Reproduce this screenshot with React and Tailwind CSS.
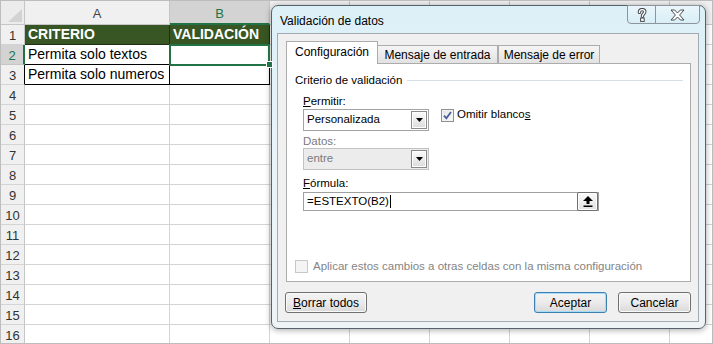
import React from 'react';

const cols = [
  { key: 'A', w: 'w-[145px]', label: 'A' },
  { key: 'B', w: 'w-[100px]', label: 'B' },
  { key: 'C', w: 'w-[80px]', label: '' },
  { key: 'D', w: 'w-[80px]', label: '' },
  { key: 'E', w: 'w-[80px]', label: '' },
  { key: 'F', w: 'w-[80px]', label: '' },
  { key: 'G', w: 'w-[80px]', label: '' },
  { key: 'H', w: 'w-[80px]', label: '' },
];

const data = {
  1: { A: 'CRITERIO', B: 'VALIDACIÓN' },
  2: { A: 'Permita solo textos', B: '' },
  3: { A: 'Permita solo numeros', B: '' },
};

const rows = Array.from({ length: 16 }, (_, i) => i + 1);

function cellClass(r, c) {
  const inTable = r <= 3 && (c === 'A' || c === 'B');
  if (r === 1 && inTable) return 'bg-[#375623] text-white font-bold border-r border-b border-[#1d2e12]';
  if (inTable) return 'bg-white text-black border-r border-b border-black';
  return 'bg-white border-r border-b border-[#d4d4d4]';
}

function rowHeadClass(r) {
  if (r === 2) return 'bg-[#d3d3d3] text-[#217346] border-r-2 border-r-[#217346] border-b border-b-[#c6c6c6]';
  if (r === 3) return 'bg-[#f0f0f0] text-[#333] border-r border-r-black border-b border-b-[#d4d4d4]';
  return 'bg-[#f0f0f0] text-[#333] border-r border-r-[#c6c6c6] border-b border-b-[#d4d4d4]';
}

function Sheet() {
  return (
    <div className="flex flex-col">
      {/* Column headers */}
      <div className="flex h-[24px] shrink-0">
        <div className="w-[24px] shrink-0 bg-[#ececec] border-r border-b border-[#c6c6c6] flex items-end justify-end p-[2px]">
          <svg width="14" height="13" viewBox="0 0 14 13">
            <polygon points="14,0 14,13 0,13" fill="#d3d3d3" />
          </svg>
        </div>
        {cols.map((c) =>
          c.key === 'B' ? (
            <div key={c.key} className={`${c.w} shrink-0 bg-[#d3d3d3] text-[#217346] border-r border-[#c6c6c6] border-b-2 border-b-[#217346] flex items-center justify-center pt-[3px] text-[13px]`}>
              {c.label}
            </div>
          ) : (
            <div key={c.key} className={`${c.w} shrink-0 bg-[#f0f0f0] text-[#444] border-r border-b border-[#c6c6c6] flex items-center justify-center pt-[3px] text-[13px]`}>
              {c.label}
            </div>
          )
        )}
      </div>

      {rows.map((r) => (
        <div key={r} className="flex h-[20px] shrink-0">
          <div className={`w-[24px] shrink-0 flex items-center justify-center pt-[2px] text-[13px] ${rowHeadClass(r)}`}>
            {r}
          </div>
          {cols.map((c) => (
            <div key={c.key} className={`${c.w} shrink-0 relative flex items-center pl-[3px] text-[14px] whitespace-nowrap ${cellClass(r, c.key)}`}>
              {data[r]?.[c.key]}
              {r === 2 && c.key === 'B' && (
                <>
                  <div className="absolute -left-[1px] -top-[1px] w-[101px] h-[22px] border-2 border-[#217346] z-10" />
                  <div className="absolute left-[96px] top-[16px] w-[7px] h-[7px] bg-[#217346] border border-white z-10" />
                </>
              )}
            </div>
          ))}
        </div>
      ))}
    </div>
  );
}

function DropBtn() {
  return (
    <div className="w-[16px] h-[18px] border border-[#8a8a8a] bg-gradient-to-b from-[#fbfbfb] to-[#dcdcdc] shadow-[inset_0_0_0_1px_#ffffff] flex items-center justify-center">
      <svg width="7" height="4" viewBox="0 0 7 4">
        <polygon points="0,0 7,0 3.5,4" fill="#000" />
      </svg>
    </div>
  );
}

function Btn({ children, className = '', primary }) {
  return (
    <button
      className={`h-[21px] rounded-[3px] border bg-gradient-to-b from-[#f4f4f4] via-[#ebebeb] to-[#d9d9d9] text-[12px] text-black flex items-center justify-center ${
        primary ? 'border-[#3c7fb1] shadow-[inset_0_0_0_1px_#a6dcf8]' : 'border-[#707070] shadow-[inset_0_0_0_1px_#fafafa]'
      } ${className}`}
    >
      {children}
    </button>
  );
}

function Dialog() {
  return (
    <div className="absolute left-[270px] top-[4px] w-[435px] h-[324px] rounded-[7px] border border-[#55626d] bg-gradient-to-b from-[#dcf0f8] via-[#e9f4f8] to-[#eef3f6] shadow-[0_1px_6px_rgba(0,0,0,0.35)] flex flex-col pl-[5px] pr-[6px] pb-[6px] text-[11.5px] text-black">
      {/* Title bar */}
      <div className="h-[27px] shrink-0 flex justify-between">
        <span className="pl-[3px] pt-[8px] leading-[14px] text-[12px]">Validación de datos</span>
        <div className="flex h-[19px] -mt-[1px] -mr-[1px]">
          <div className="w-[29px] h-full border border-[#8d949b] rounded-bl-[4px] bg-gradient-to-b from-[#eaf6fb] to-[#d8eef6] flex items-center justify-center">
            <svg width="10" height="14" viewBox="0 0 10 14">
              <path d="M2.4 4.4 C2.4 2.4 3.6 1.6 5.2 1.6 C7 1.6 7.8 2.6 7.8 3.8 C7.8 5.6 5.4 5.8 5.4 8.2" fill="none" stroke="#45494d" strokeWidth="3.4" strokeLinecap="round" />
              <path d="M2.4 4.4 C2.4 2.4 3.6 1.6 5.2 1.6 C7 1.6 7.8 2.6 7.8 3.8 C7.8 5.6 5.4 5.8 5.4 8.2" fill="none" stroke="#ffffff" strokeWidth="1.4" strokeLinecap="round" />
              <rect x="3.6" y="10" width="3.6" height="3.4" fill="#ffffff" stroke="#45494d" strokeWidth="1" />
            </svg>
          </div>
          <div className="w-[45px] h-full -ml-px border border-[#8d949b] rounded-br-[4px] bg-gradient-to-b from-[#eaf6fb] to-[#d8eef6] flex items-center justify-center">
            <svg width="15" height="12" viewBox="0 0 15 12">
              <path d="M1 1 L4.6 1 L7.5 4 L10.4 1 L14 1 L9.6 6 L14 11 L10.4 11 L7.5 8 L4.6 11 L1 11 L5.4 6 Z" fill="#ffffff" stroke="#474b50" strokeWidth="1" strokeLinejoin="round" />
            </svg>
          </div>
        </div>
      </div>

      {/* Client area */}
      <div className="flex-1 bg-[#f0f0f0] border border-[#a3abb1] flex flex-col pt-[7px] pl-[8px] pr-[7px] pb-[8px]">
        {/* Tabs */}
        <div className="flex items-end h-[22px] shrink-0">
          <div className="relative z-10 -mb-px w-[92px] h-[23px] bg-white border-t border-l border-r border-[#acacac] flex items-center justify-center pb-[2px] text-[12px]">
            Configuración
          </div>
          <div className="-ml-px w-[121px] h-[18px] bg-gradient-to-b from-[#f5f5f5] to-[#e2e2e2] border-t border-l border-r border-[#acacac] flex items-center justify-center text-[12px]">
            Mensaje de entrada
          </div>
          <div className="w-[102px] h-[18px] bg-gradient-to-b from-[#f5f5f5] to-[#e2e2e2] border-t border-l border-r border-[#acacac] flex items-center justify-center text-[12px]">
            Mensaje de error
          </div>
        </div>

        {/* Tab panel */}
        <div className="h-[219px] shrink-0 bg-white border border-[#acacac] pl-[8px] pt-[9px] flex flex-col">
          <div className="flex items-center h-[14px]">
            <span className="leading-[14px]">Criterio de validación</span>
            <div className="flex-1 h-px bg-[#d5dfe5] ml-[5px] mr-[7px]" />
          </div>

          <div className="pl-[8px] flex flex-col">
            <span className="mt-[7px] leading-[14px]">
              <u>P</u>ermitir:
            </span>
            <div className="mt-[1px] flex items-center gap-[12px]">
              <div className="flex items-center h-[22px] w-[126px] border border-[#a3a3a3] bg-white pl-[3px] pr-[1px]">
                <span className="flex-1">Personalizada</span>
                <DropBtn />
              </div>
              <div className="flex items-center gap-[3px] -mt-[10px]">
                <div className="w-[13px] h-[13px] border border-[#8e8f8f] bg-gradient-to-br from-[#e3e3e3] to-[#fbfbfb] shadow-[inset_0_0_0_1px_#f4f4f4] flex items-center justify-center">
                  <svg width="9" height="9" viewBox="0 0 9 9">
                    <path d="M1 4.6 L3.4 7.4 L8 1" fill="none" stroke="#4a5f97" strokeWidth="1.8" />
                  </svg>
                </div>
                <span>
                  Omitir blanco<u>s</u>
                </span>
              </div>
            </div>

            <span className="mt-[3px] leading-[14px] text-[#7b7b7b]">Datos:</span>
            <div className="flex items-center h-[22px] w-[126px] border border-[#c2c2c2] bg-[#ececec] pl-[3px] pr-[1px] text-[#7b7b7b]">
              <span className="flex-1">entre</span>
              <DropBtn />
            </div>

            <span className="mt-[6px] leading-[14px]">
              <u>F</u>órmula:
            </span>
            <div className="mt-[2px] flex items-center h-[19px] w-[296px] border border-[#a0a0a0] bg-white pl-[3px] pr-0">
              <span className="flex items-center">
                =ESTEXTO(B2)
                <span className="inline-block w-px h-[13px] bg-black ml-[1px]" />
              </span>
              <div className="flex-1" />
              <div className="w-[21px] h-[19px] border border-[#6f6f6f] rounded-[2px] bg-gradient-to-b from-[#fbfbfb] to-[#e2e2e2] shadow-[inset_0_0_0_1px_#ffffff] flex items-center justify-center">
                <svg width="10" height="11" viewBox="0 0 10 11">
                  <polygon points="5,0 10,5 6.5,5 6.5,8 3.5,8 3.5,5 0,5" fill="#000" />
                  <rect x="0.5" y="9.5" width="9" height="1.5" fill="#000" />
                </svg>
              </div>
            </div>
          </div>

          <div className="mt-[47px] flex items-center gap-[5px] text-[#848484]">
            <div className="w-[13px] h-[13px] border border-[#c8c8c8] bg-[#f4f4f4]" />
            <span>Aplicar estos cambios a otras celdas con la misma configuración</span>
          </div>
        </div>

        {/* Buttons */}
        <div className="mt-[10px] flex items-center">
          <Btn className="w-[82px] -ml-px">
            <span>
              <u>B</u>orrar todos
            </span>
          </Btn>
          <div className="flex-1" />
          <Btn primary className="w-[73px]">Aceptar</Btn>
          <Btn className="w-[73px] ml-[11px]">Cancelar</Btn>
        </div>
      </div>
    </div>
  );
}

export default function App() {
  return (
    <div className="relative w-[713px] h-[344px] overflow-hidden bg-white border border-[#bdbdbd] font-[Liberation_Sans,Arial,sans-serif]">
      <Sheet />
      <Dialog />
    </div>
  );
}
